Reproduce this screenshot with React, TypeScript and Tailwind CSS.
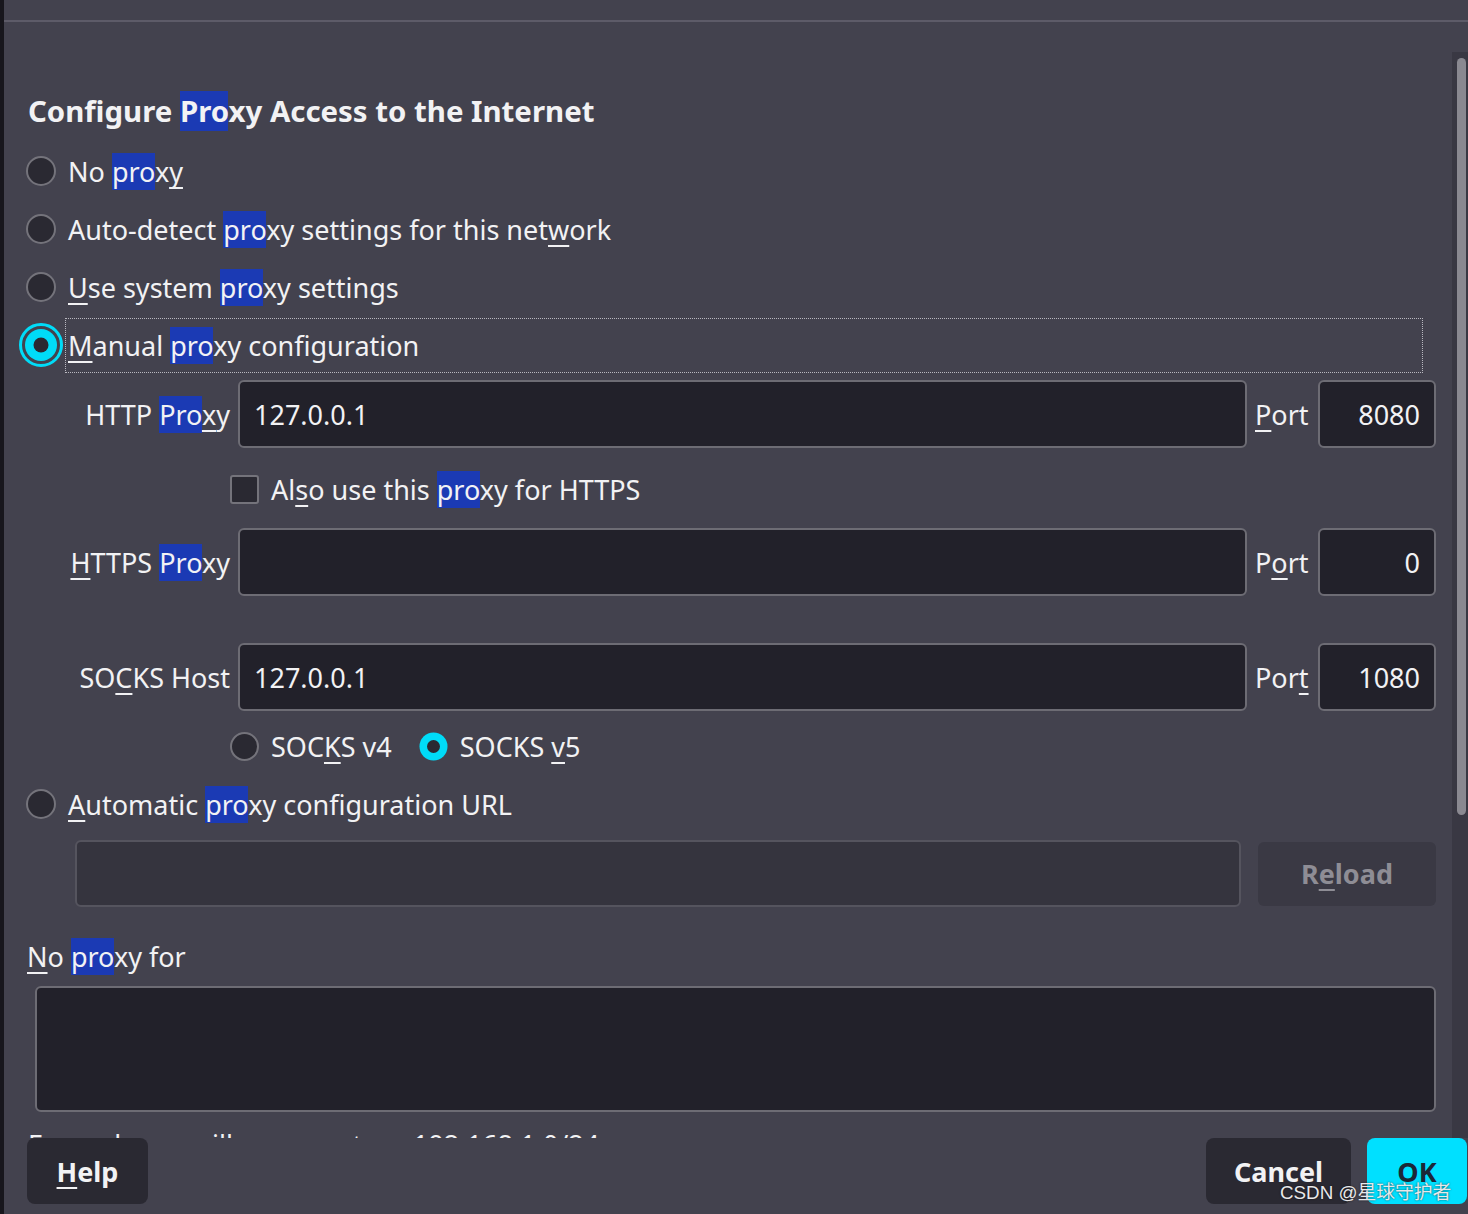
import type { ReactNode } from "react";

const Hl = ({ children }: { children: ReactNode }) => (
  <span className="bg-[#1b3ab4]">{children}</span>
);

const U = ({ children }: { children: ReactNode }) => (
  <span className="underline decoration-2 underline-offset-[5px] [text-decoration-skip-ink:none]">
    {children}
  </span>
);

const CYAN = "#00dcf8";

interface RadioProps {
  size?: number;
  checked?: boolean;
  focus?: boolean;
}

const Radio = ({ size = 30, checked = false, focus = false }: RadioProps) => {
  if (checked) {
    const s = focus ? 46 : size;
    const c = s / 2;
    return (
      <svg width={s} height={s} viewBox={`0 0 ${s} ${s}`}>
        {focus && <circle cx={c} cy={c} r={20.5} fill="none" stroke={CYAN} strokeWidth={3} />}
        <circle cx={c} cy={c} r={focus ? 16 : size / 2 - 0.5} fill={CYAN} />
        <circle cx={c} cy={c} r={focus ? 7.5 : 6.5} fill="#2a2932" />
      </svg>
    );
  }
  const c = size / 2;
  return (
    <svg width={size} height={size} viewBox={`0 0 ${size} ${size}`}>
      <circle cx={c} cy={c} r={c - 1} fill="#2a2932" stroke="#74737b" strokeWidth={2} />
    </svg>
  );
};

const RadioRow = ({
  children,
  checked = false,
  focus = false,
  className = "",
}: {
  children: ReactNode;
  checked?: boolean;
  focus?: boolean;
  className?: string;
}) => (
  <div className={`flex items-center h-[58px] ${className}`}>
    <div className="ml-[14px] w-[46px] flex justify-center">
      <Radio checked={checked} focus={focus} />
    </div>
    {focus ? (
      <div className="ml-[1px] mr-[29px] flex-1 h-[55px] flex items-center pl-[2px] border border-dotted border-[#b9b8c0]">
        {children}
      </div>
    ) : (
      <div className="ml-[1px] pl-[3px]">{children}</div>
    )}
  </div>
);

const Field = ({
  label,
  value,
  portLabel,
  port,
  className = "",
}: {
  label: ReactNode;
  value: string;
  portLabel: ReactNode;
  port: string;
  className?: string;
}) => (
  <div className={`flex items-center h-[68px] mr-[16px] ${className}`}>
    <div className="w-[226px] text-right whitespace-nowrap">{label}</div>
    <div className="ml-[8px] flex-1 h-full flex items-center pl-[14px] rounded-[6px] border-2 border-[#6d6c74] bg-[#22212a]">
      {value}
    </div>
    <div className="ml-[8px] w-[54px] whitespace-nowrap">{portLabel}</div>
    <div className="ml-[9px] w-[118px] h-full flex items-center justify-end pr-[14px] rounded-[6px] border-2 border-[#6d6c74] bg-[#22212a]">
      {port}
    </div>
  </div>
);

export default function App() {
  return (
    <div className="relative w-[1468px] h-[1214px] flex overflow-hidden bg-[#43424e] font-['Noto_Sans',sans-serif] text-[27px] leading-none text-[#f2f2f4]">
      <div className="w-[4px] shrink-0 bg-[#17161c]" />

      <div className="flex-1 min-w-0 flex flex-col">
        <div className="h-[20px] shrink-0" />
        <div className="h-[2px] shrink-0 bg-[#5d5b68]" />

        <div className="flex-1 min-h-0 flex">
          {/* Scrolled settings */}
          <div className="flex-1 min-w-0 overflow-hidden">
            <div className="mt-[63px] h-[53px] flex items-center pl-[24px] text-[29.4px] font-bold whitespace-nowrap">
              <span>
                Configure <Hl>Pro</Hl>xy Access to the Internet
              </span>
            </div>

            <RadioRow className="mt-[4px]">
              No <Hl>pro</Hl>x<U>y</U>
            </RadioRow>
            <RadioRow>
              Auto-detect <Hl>pro</Hl>xy settings for this net<U>w</U>ork
            </RadioRow>
            <RadioRow>
              <U>U</U>se system <Hl>pro</Hl>xy settings
            </RadioRow>
            <RadioRow checked focus>
              <span>
                <U>M</U>anual <Hl>pro</Hl>xy configuration
              </span>
            </RadioRow>

            <Field
              className="mt-[6px]"
              label={
                <>
                  HTTP <Hl>Pro</Hl>
                  <U>x</U>y
                </>
              }
              value="127.0.0.1"
              portLabel={
                <>
                  <U>P</U>ort
                </>
              }
              port="8080"
            />

            <div className="mt-[10px] h-[62px] flex items-center pl-[226px]">
              <div className="w-[29px] h-[29px] rounded-[3px] border-2 border-[#74737b] bg-[#2a2932]" />
              <div className="ml-[12px] whitespace-nowrap">
                Al<U>s</U>o use this <Hl>pro</Hl>xy for HTTPS
              </div>
            </div>

            <Field
              className="mt-[8px]"
              label={
                <>
                  <U>H</U>TTPS <Hl>Pro</Hl>xy
                </>
              }
              value=""
              portLabel={
                <>
                  P<U>o</U>rt
                </>
              }
              port="0"
            />

            <Field
              className="mt-[47px]"
              label={
                <>
                  SO<U>C</U>KS Host
                </>
              }
              value="127.0.0.1"
              portLabel={
                <>
                  Por<U>t</U>
                </>
              }
              port="1080"
            />

            <div className="mt-[7px] h-[56px] flex items-center pl-[226px] whitespace-nowrap">
              <Radio size={29} />
              <div className="ml-[12px]">
                SOC<U>K</U>S v4
              </div>
              <div className="ml-[27px]">
                <Radio size={29} checked />
              </div>
              <div className="ml-[12px]">
                SOCKS <U>v</U>5
              </div>
            </div>

            <RadioRow className="mt-[1px]">
              <U>A</U>utomatic <Hl>pro</Hl>xy configuration URL
            </RadioRow>

            <div className="mt-[7px] h-[67px] flex items-center mr-[16px]">
              <div className="ml-[71px] flex-1 h-full rounded-[6px] border-2 border-[#55545e] bg-[#35343e]" />
              <div className="ml-[17px] w-[178px] h-[64px] flex items-center justify-center rounded-[6px] bg-[#3a3944] font-bold text-[#8e8d95]">
                <span>
                  R<U>e</U>load
                </span>
              </div>
            </div>

            <div className="mt-[23px] h-[52px] flex items-center pl-[23px]">
              <span>
                <U>N</U>o <Hl>pro</Hl>xy for
              </span>
            </div>

            <div className="mt-[4px] ml-[31px] mr-[16px] h-[126px] rounded-[6px] border-2 border-[#6d6c74] bg-[#22212a]" />

            <div className="mt-[13px] h-[40px] leading-[40px] pl-[24px] whitespace-nowrap">
              Example: .mozilla.org, .net.nz, 192.168.1.0/24
            </div>
          </div>

          {/* Scrollbar */}
          <div className="w-[16px] shrink-0 pt-[30px] flex flex-col">
            <div className="flex-1 bg-[#393843] pt-[6px] pl-[5px]">
              <div className="w-[9px] h-[757px] rounded-full bg-[#8a8991]" />
            </div>
          </div>
        </div>

        {/* Dialog buttons */}
        <div className="h-[76px] shrink-0 flex items-start pl-[23px] pr-[1px] font-bold">
          <button className="w-[121px] h-[66px] rounded-[8px] bg-[#2a2932] flex items-center justify-center">
            <span>
              <U>H</U>elp
            </span>
          </button>
          <div className="flex-1" />
          <button className="w-[145px] h-[66px] rounded-[8px] bg-[#2a2932] flex items-center justify-center">
            Cancel
          </button>
          <button className="ml-[16px] w-[100px] h-[66px] rounded-[8px] bg-[#00e0ff] text-[#1c2838] flex items-center justify-center">
            OK
          </button>
        </div>
      </div>

      <div className="absolute left-[1280px] top-[1184px] text-[18.8px] leading-none whitespace-nowrap text-[#e8e8ea] font-['Liberation_Sans','Noto_Sans_CJK_SC',sans-serif] [text-shadow:0_0_2px_rgba(0,0,0,0.7)]">
        CSDN @星球守护者
      </div>
    </div>
  );
}
